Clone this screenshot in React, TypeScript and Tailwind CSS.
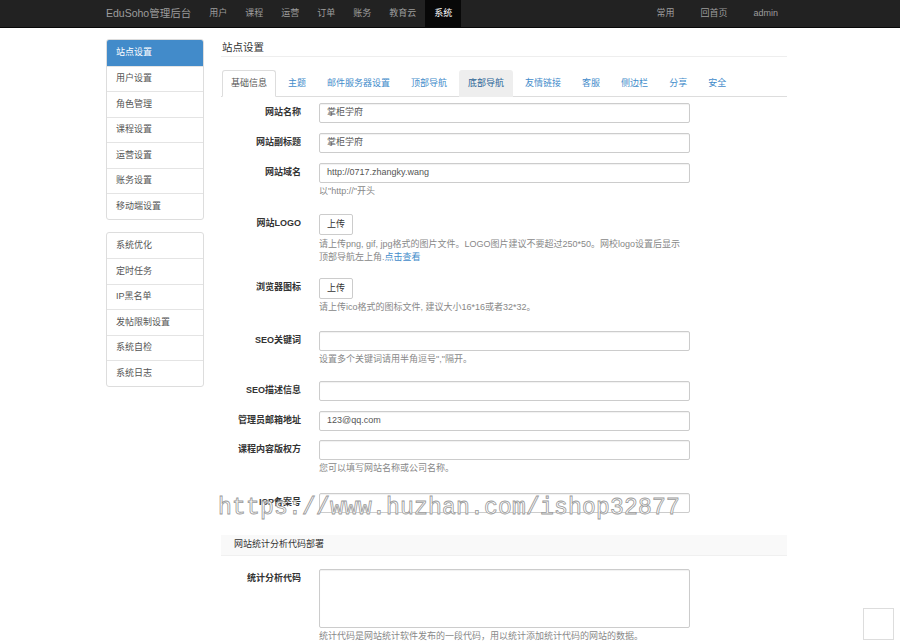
import React from 'react';

const topMenu = ['用户', '课程', '运营', '订单', '账务', '教育云'];
const sideGroupA = ['站点设置', '用户设置', '角色管理', '课程设置', '运营设置', '账务设置', '移动端设置'];
const sideGroupB = ['系统优化', '定时任务', 'IP黑名单', '发帖限制设置', '系统自检', '系统日志'];
const tabs = ['基础信息', '主题', '邮件服务器设置', '顶部导航', '底部导航', '友情链接', '客服', '侧边栏', '分享', '安全'];

function SideGroup({ items, active }: { items: string[]; active?: string }) {
  return (
    <div className="rounded-[3px] border border-[#ddd] overflow-hidden bg-white">
      {items.map((item, i) => (
        <div
          key={item}
          className={`h-[25.5px] flex items-center pl-[9px] text-[9px] ${i > 0 ? 'border-t border-[#e4e4e4]' : ''} ${
            item === active ? 'bg-[#428bca] text-white' : 'text-[#555]'
          }`}
        >
          {item}
        </div>
      ))}
    </div>
  );
}

function Label({ children }: { children: React.ReactNode }) {
  return (
    <div className="w-[80px] shrink-0 h-[20px] flex items-center justify-end text-[9px] font-bold text-[#333]">
      {children}
    </div>
  );
}

function Input({ value }: { value?: string }) {
  return (
    <div className="w-[371px] h-[20px] border border-[#ccc] rounded-[2px] bg-white shadow-[inset_0_1px_1px_rgba(0,0,0,0.06)] flex items-center pl-[7px] text-[9px] text-[#555]">
      {value}
    </div>
  );
}

function Help({ children }: { children: React.ReactNode }) {
  return <div className="mt-[2px] text-[9px] leading-[12px] text-[#888]">{children}</div>;
}

function UploadButton() {
  return (
    <div className="w-[34px] h-[21px] border border-[#ccc] rounded-[2px] bg-white flex items-center justify-center text-[9px] text-[#333]">
      上传
    </div>
  );
}

export default function App() {
  return (
    <div className="relative min-h-[644px] bg-white font-['Liberation_Sans','Noto_Sans_CJK_SC',sans-serif]">
      {/* Top navbar */}
      <div className="h-[28px] bg-[#222] border-b border-[#080808]">
        <div className="w-[688px] mx-auto h-full flex items-center text-[9px] text-[#9d9d9d]">
          <div className="text-[10.5px] pr-[9px]">EduSoho管理后台</div>
          {topMenu.map((m) => (
            <div key={m} className="h-full flex items-center px-[9px]">
              {m}
            </div>
          ))}
          <div className="h-full flex items-center px-[9px] bg-[#080808] text-white">系统</div>
          <div className="ml-auto flex h-full items-center pr-[3px]">
            <div className="px-[13px]">常用</div>
            <div className="px-[13px]">回首页</div>
            <div className="px-[13px]">admin</div>
          </div>
        </div>
      </div>

      <div className="w-[688px] mx-auto pt-[11px] flex gap-[17px]">
        {/* Sidebar */}
        <div className="w-[98px] shrink-0">
          <SideGroup items={sideGroupA} active="站点设置" />
          <div className="mt-[12px]">
            <SideGroup items={sideGroupB} />
          </div>
        </div>

        {/* Main */}
        <div className="w-[566px]">
          <div className="h-[18px] border-b border-[#eee] text-[10.5px] leading-[16px] text-[#333] pl-[1px]">站点设置</div>

          <div className="mt-[13px] flex gap-[3px] border-b border-[#ddd] pl-[1px]">
            {tabs.map((t, i) => (
              <div
                key={t}
                className={`px-[8px] py-[7px] text-[9px] leading-[11px] rounded-t-[3px] -mb-[1px] ${
                  i === 0
                    ? 'bg-white border border-[#ddd] border-b-white text-[#555]'
                    : t === '底部导航'
                    ? 'bg-[#eee] border border-transparent text-[#2a6496]'
                    : 'border border-transparent text-[#428bca]'
                }`}
              >
                {t}
              </div>
            ))}
          </div>

          {/* Form */}
          <div className="flex gap-[18px] mt-[6px]">
            <Label>网站名称</Label>
            <Input value="掌柜学府" />
          </div>
          <div className="flex gap-[18px] mt-[10px]">
            <Label>网站副标题</Label>
            <Input value="掌柜学府" />
          </div>
          <div className="flex gap-[18px] mt-[10px]">
            <Label>网站域名</Label>
            <div>
              <Input value="http://0717.zhangky.wang" />
              <Help>以"http://"开头</Help>
            </div>
          </div>
          <div className="flex gap-[18px] mt-[17px]">
            <Label>网站LOGO</Label>
            <div>
              <UploadButton />
              <div className="mt-[3px] text-[9px] leading-[13px] text-[#888] w-[371px]">
                请上传png, gif, jpg格式的图片文件。LOGO图片建议不要超过250*50。网校logo设置后显示
                <br />
                顶部导航左上角.<span className="text-[#428bca]">点击查看</span>
              </div>
            </div>
          </div>
          <div className="flex gap-[18px] mt-[14px]">
            <Label>浏览器图标</Label>
            <div>
              <UploadButton />
              <Help>请上传ico格式的图标文件, 建议大小16*16或者32*32。</Help>
            </div>
          </div>
          <div className="flex gap-[18px] mt-[18px]">
            <Label>SEO关键词</Label>
            <div>
              <Input />
              <Help>设置多个关键词请用半角逗号","隔开。</Help>
            </div>
          </div>
          <div className="flex gap-[18px] mt-[16px]">
            <Label>SEO描述信息</Label>
            <Input />
          </div>
          <div className="flex gap-[18px] mt-[10px]">
            <Label>管理员邮箱地址</Label>
            <Input value="123@qq.com" />
          </div>
          <div className="flex gap-[18px] mt-[9px]">
            <Label>课程内容版权方</Label>
            <div>
              <Input />
              <Help>您可以填写网站名称或公司名称。</Help>
            </div>
          </div>
          <div className="flex gap-[18px] mt-[19px]">
            <Label>ICP备案号</Label>
            <Input />
          </div>

          <div className="mt-[22px] h-[21px] bg-[#f9f9f9] border-b border-[#f0f0f0] flex items-center pl-[13px] text-[9px] text-[#333]">
            网站统计分析代码部署
          </div>

          <div className="flex gap-[18px] mt-[13px]">
            <Label>统计分析代码</Label>
            <div>
              <div className="w-[371px] h-[59px] border border-[#ccc] rounded-[2px] bg-white shadow-[inset_0_1px_1px_rgba(0,0,0,0.06)]" />
              <Help>统计代码是网站统计软件发布的一段代码，用以统计添加统计代码的网站的数据。</Help>
            </div>
          </div>
        </div>
      </div>

      {/* Watermark */}
      <div className="absolute left-[218px] top-[494px] text-[23px] leading-[28px] tracking-[0.2px] font-['Liberation_Mono',monospace] text-white [-webkit-text-stroke:0.8px_#999] pointer-events-none whitespace-nowrap">
        https://www.huzhan.com/ishop32877
      </div>

      {/* Back to top */}
      <div className="fixed right-[6px] bottom-[4px] w-[31px] h-[32px] border border-[#ddd] bg-white" />
    </div>
  );
}
